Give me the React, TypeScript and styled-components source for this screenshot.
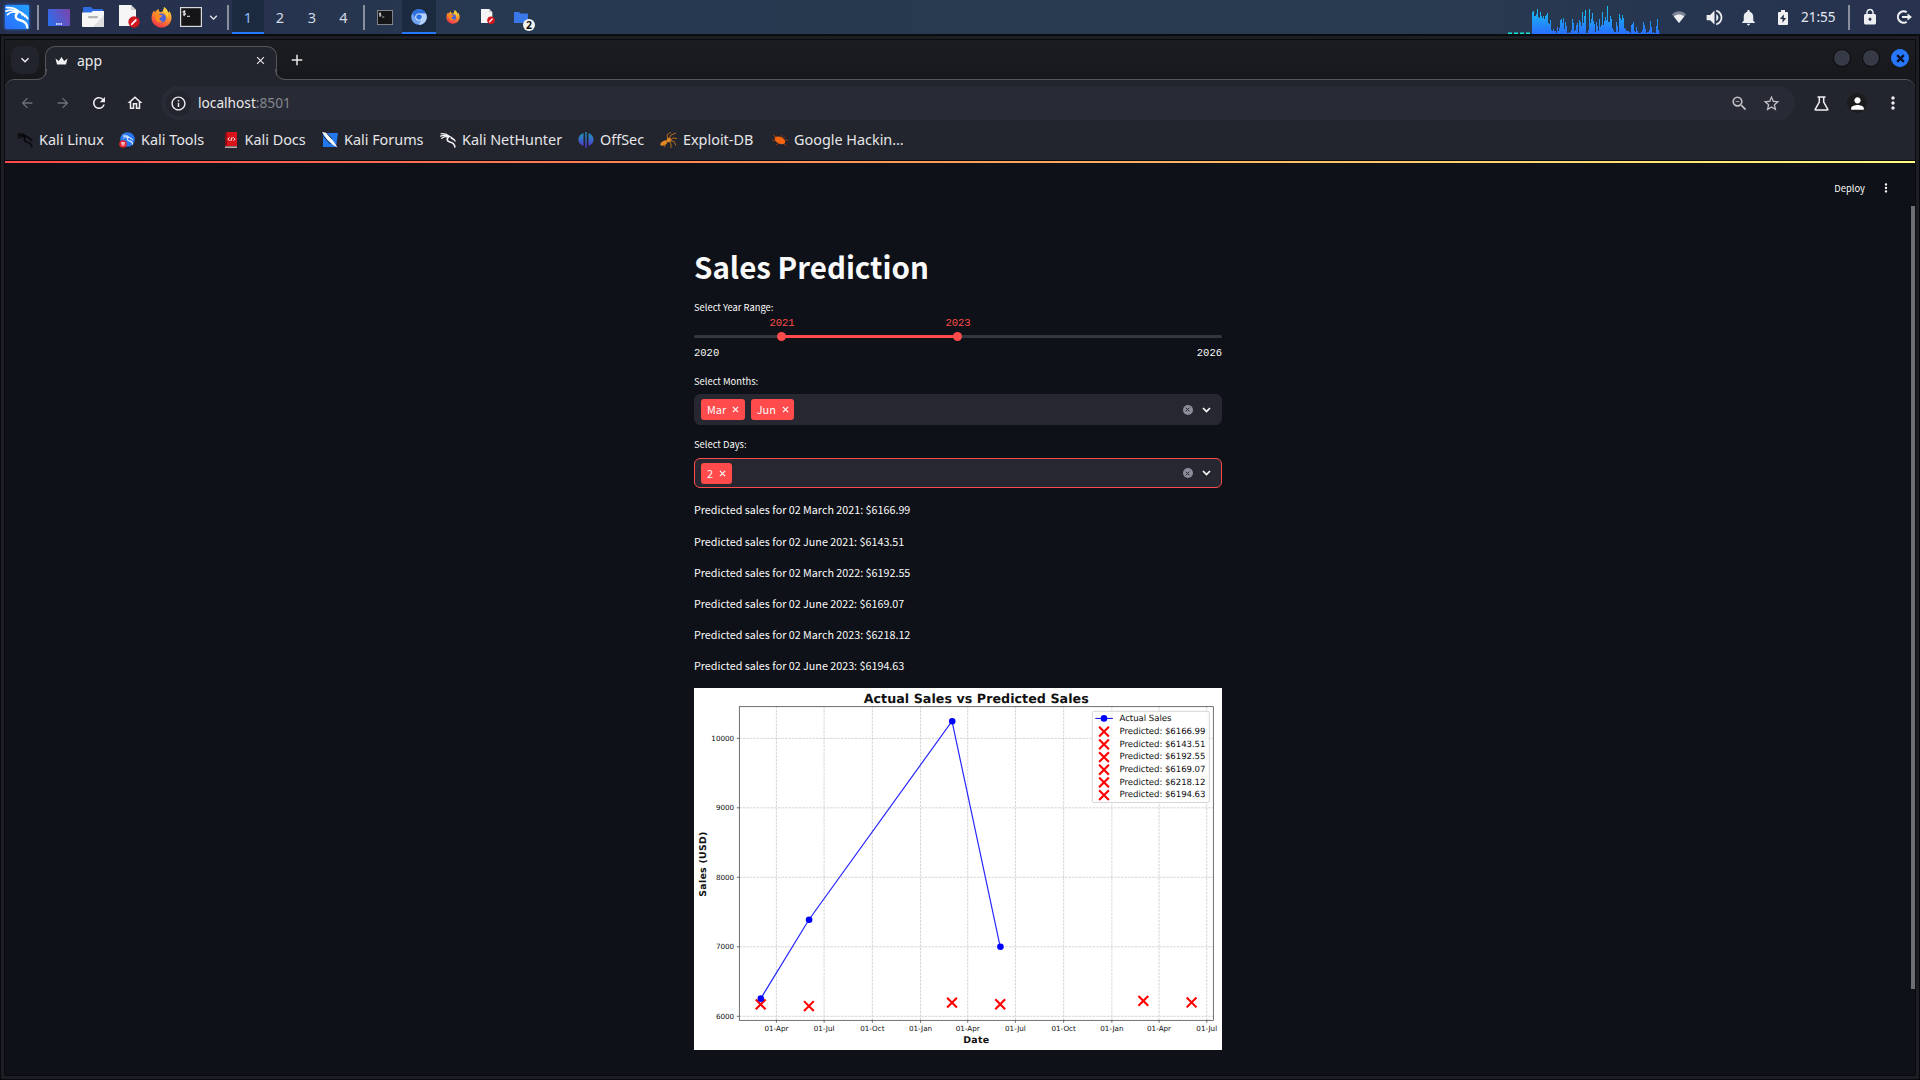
import React from "react";
import styled, { createGlobalStyle, css } from "styled-components";
import {
  MdArrowBack,
  MdArrowForward,
  MdRefresh,
  MdOutlineHome,
  MdInfoOutline,
  MdZoomOut,
  MdStarBorder,
  MdMoreVert,
  MdPerson,
  MdExpandMore,
  MdClose,
  MdAdd,
  MdLock,
  MdNotifications,
  MdVolumeUp,
} from "react-icons/md";

const UI = `"Noto Sans", "Open Sans", sans-serif`;
const SANS = `"Noto Sans CJK SC", "Noto Sans", sans-serif`;
const MONO = `"Liberation Mono", monospace`;

const Global = createGlobalStyle`
  * { box-sizing: border-box; }
  body { margin: 0; background: #0e1117; overflow: hidden; }
  svg { display: block; flex: none; }
`;

/* ---------- Desktop ---------- */

const Desktop = styled.div`
  width: 1920px;
  height: 1080px;
  display: flex;
  flex-direction: column;
  background: #08090c;
  font-family: ${UI};
`;

const Panel = styled.header`
  height: 36px;
  flex: none;
  display: flex;
  border-bottom: 2px solid #0b0c10;
  background: linear-gradient(90deg, #26304c 0, #27324e 230px, #273950 480px, #293b50 1400px, #273750 1600px, #27324f 1920px);
`;

const Slot = styled.div<{ $w: number; $active?: boolean }>`
  width: ${(p) => p.$w}px;
  height: 34px;
  display: flex;
  align-items: center;
  justify-content: center;
  color: #eceef1;
  font-size: 14.5px;
  ${(p) =>
    p.$active &&
    css`
      background: #1c2a40;
      border-bottom: 2px solid #2777ff;
      padding-top: 2px;
    `}
`;

const Workspace = styled(Slot)`
  padding-bottom: 1px;
  color: ${(p) => (p.$active ? "#8dbcf2" : "#d3dce6")};
`;

const Divider = styled.div`
  width: 2px;
  height: 25px;
  margin-top: 5px;
  background: #898f9c;
`;

const Gap = styled.div<{ $w?: number }>`
  ${(p) => (p.$w ? `width: ${p.$w}px; flex: none;` : "flex: 1;")}
`;

const Clock = styled.div`
  width: 47px;
  line-height: 34px;
  font-size: 13.5px;
  color: #e4e9f0;
`;

/* ---------- Window ---------- */

const Frame = styled.div`
  flex: 1;
  min-height: 0;
  margin: 0 1px 1px;
  padding: 3px 3px 3px;
  background: #1d1e24;
`;

const Window = styled.div`
  height: 100%;
  display: flex;
  flex-direction: column;
  border: 1px solid #0a0b0e;
  background: #0e1117;
`;

const TabStrip = styled.div`
  height: 39px;
  flex: none;
  display: flex;
  padding: 0 6px;
  background: linear-gradient(#1c1d21, #17181c);
`;

const TabSearch = styled.div`
  width: 28px;
  height: 28px;
  margin-top: 6px;
  border-radius: 9px;
  background: #22242d;
  color: #f0f0f2;
  display: flex;
  align-items: center;
  justify-content: center;
`;

const Tab = styled.div`
  position: relative;
  width: 232px;
  height: 34px;
  margin: 6px 0 0 6px;
  padding: 0 9px 6px;
  display: flex;
  align-items: center;
  border: 1px solid #54565c;
  border-bottom: 0;
  border-radius: 10px 10px 0 0;
  background: #22252e;
  color: #ececee;
  font-size: 14px;
  z-index: 1;
  &::before,
  &::after {
    content: "";
    position: absolute;
    bottom: 0;
    width: 10px;
    height: 10px;
    border-bottom: 1px solid #54565c;
    background: transparent;
  }
  &::before {
    left: -10px;
    border-right: 1px solid #54565c;
    border-bottom-right-radius: 10px;
    box-shadow: 3px 3px 0 1px #22252e;
    clip-path: inset(0 -1px 0 0);
  }
  &::after {
    right: -10px;
    border-left: 1px solid #54565c;
    border-bottom-left-radius: 10px;
    box-shadow: -3px 3px 0 1px #22252e;
    clip-path: inset(0 0 0 -1px);
  }
`;

const TabTitle = styled.span`
  flex: 1;
  padding-left: 9px;
  line-height: 24px;
`;

const NewTab = styled.div`
  width: 40px;
  padding: 11px 0 0 11px;
  color: #e8e8ea;
`;

const Controls = styled.div`
  margin-left: auto;
  display: flex;
  gap: 11px;
  padding: 9px 0 0;
`;

const Control = styled.div<{ $close?: boolean }>`
  width: 18px;
  height: 18px;
  border-radius: 50%;
  border: 1px solid ${(p) => (p.$close ? "#2777ff" : "#08090b")};
  background: ${(p) => (p.$close ? "#2777ff" : "#363a46")};
  color: #0b1122;
  display: flex;
  align-items: center;
  justify-content: center;
`;

const Chrome = styled.div`
  height: 82px;
  flex: none;
  border-top: 1px solid #54565c;
  border-bottom: 1px solid #0b0c10;
  border-radius: 9px 9px 0 0;
  background: #22252e;
`;

const ChromeBack = styled.div`
  background: #17181c;
`;

const AddressRow = styled.div`
  display: flex;
  align-items: center;
  height: 46px;
  padding: 0 4px 0 4px;
`;

const Tool = styled.div<{ $w?: number; $dim?: boolean }>`
  width: ${(p) => p.$w ?? 36}px;
  display: flex;
  justify-content: center;
  color: ${(p) => (p.$dim ? "#6e7078" : "#eeeef0")};
`;

const Omnibox = styled.div`
  flex: 1;
  height: 34px;
  margin: 0 8px 0 8px;
  padding: 0 6px 0 5px;
  border-radius: 17px;
  background: #282a35;
  display: flex;
  align-items: center;
  color: #c0c1c6;
`;

const InfoBadge = styled.div`
  width: 25px;
  height: 25px;
  border-radius: 50%;
  background: #22252e;
  color: #ececee;
  display: flex;
  align-items: center;
  justify-content: center;
`;

const Url = styled.div`
  flex: 1;
  padding-left: 7px;
  font-size: 13.7px;
  line-height: 20px;
  color: #e9e9eb;
  span {
    color: #85878f;
  }
`;

const Avatar = styled.div`
  width: 20px;
  height: 20px;
  border-radius: 50%;
  background: #1c1c1e;
  color: #fff;
  display: flex;
  align-items: center;
  justify-content: center;
`;

const Bookmarks = styled.div`
  display: flex;
  height: 34px;
  padding: 0 0 7px 12px;
  align-items: center;
`;

const Bookmark = styled.div<{ $w: number }>`
  width: ${(p) => p.$w}px;
  display: flex;
  gap: 6px;
  align-items: center;
  white-space: nowrap;
  font-size: 14.4px;
  line-height: 24px;
  color: #e6e6e9;
`;

/* ---------- Page ---------- */

const Rainbow = styled.div`
  height: 2px;
  flex: none;
  background: linear-gradient(90deg, #ff4b4b, #ffa05c 50%, #fffd80);
`;

const Page = styled.div`
  flex: 1;
  min-height: 0;
  display: flex;
  flex-direction: column;
  align-items: center;
  position: relative;
  font-family: ${SANS};
  color: #fafafa;
`;

const Scroll = styled.div`
  position: absolute;
  right: 0;
  top: 43px;
  width: 4px;
  height: 783px;
  background: #6d6e72;
`;

const PageHeader = styled.div`
  width: 100%;
  height: 50px;
  display: flex;
  align-items: center;
  justify-content: flex-end;
  gap: 14px;
  padding-right: 22px;
  font-size: 9.4px;
  line-height: 14px;
`;

const Main = styled.main`
  width: 528px;
  margin: 33px 0 0 -4px;
  display: flex;
  flex-direction: column;
`;

const Title = styled.h1`
  margin: 0 0 12px;
  font-size: 29.5px;
  line-height: 40px;
  font-weight: 700;
`;

const Label = styled.div<{ $mb: number; $lh?: number }>`
  height: 16px;
  margin-bottom: ${(p) => p.$mb}px;
  font-size: 9.4px;
  line-height: ${(p) => p.$lh ?? 16}px;
`;

const Slider = styled.div`
  position: relative;
  height: 42px;
  margin-bottom: 14px;
  padding-top: 18px;
  font: 10.5px/12px ${MONO};
`;

const Track = styled.div`
  height: 3px;
  border-radius: 2px;
  background: linear-gradient(90deg, #33363f 16.67%, #ff4b4b 16.67% 50%, #33363f 50%);
`;

const Thumb = styled.div<{ $pos: number }>`
  position: absolute;
  left: ${(p) => p.$pos}%;
  top: 15px;
  width: 9px;
  height: 9px;
  margin-left: -4.8px;
  border-radius: 50%;
  background: #ff4b4b;
`;

const ThumbValue = styled.div<{ $pos: number }>`
  position: absolute;
  left: ${(p) => p.$pos}%;
  top: 0;
  transform: translateX(-50%);
  color: #ff4b4b;
`;

const Bounds = styled.div`
  display: flex;
  justify-content: space-between;
  padding-top: 9px;
`;

const Select = styled.div<{ $focus?: boolean }>`
  height: ${(p) => (p.$focus ? 30 : 31)}px;
  margin-bottom: ${(p) => (p.$focus ? 12 : 11)}px;
  padding: 0 10.5px 0 6px;
  border: 1px solid ${(p) => (p.$focus ? "#ff4b4b" : "#262730")};
  border-radius: 6px;
  background: #262730;
  display: flex;
  align-items: center;
  gap: 6px;
`;

const Tag = styled.div`
  height: 21px;
  padding: 0 5.5px 0 6px;
  border-radius: 3px;
  background: #ff4b4b;
  display: flex;
  align-items: center;
  gap: 6px;
  font-size: 10.9px;
  line-height: 21px;
`;

const Clear = styled.div`
  width: 10px;
  height: 10px;
  border-radius: 50%;
  margin-left: auto;
  background: #8b8d9a;
  color: #262730;
  display: flex;
  align-items: center;
  justify-content: center;
`;

const SelectArrow = styled.div`
  margin-left: 3px;
`;

const Row = styled.p`
  margin: 0 0 12px;
  font-size: 10.75px;
  line-height: 19px;
  &:first-child,
  &:last-child {
    margin-bottom: 13px;
  }
`;

/* ---------- Icons ---------- */

const Dragon = ({ size, color, w = 1.7 }: { size: number; color: string; w?: number }) => (
  <svg width={size} height={size} viewBox="0 0 24 24" fill="none" stroke={color} strokeLinecap="round">
    <path strokeWidth={w} d="M1.5 2.6C6 2.4 10 3 13.4 5.8M1 6.2C4.500 4.600 8.500 4.800 12.500 6.800M2.500 9.600C5 7 8.500 6.500 12 7.600" />
    <path strokeWidth={w * 1.1} d="M10 6.200C15.500 6.300 18.500 8.500 20 11.500M17 9.500C19.500 9.500 21.500 11 22.600 13.600" />
    <path strokeWidth={w * 1.35} d="M12.500 8C9.500 10.500 10.500 14 14.500 15C19.500 16 22 18 22.300 22.500" />
  </svg>
);

const KaliLogo = () => (
  <svg width="30" height="30" viewBox="-3 -3 30 30">
    <defs>
      <linearGradient id="kali" x1="0" y1="1" x2="1" y2="0">
        <stop offset="0" stopColor="#2b6cff" />
        <stop offset="1" stopColor="#22a2ff" />
      </linearGradient>
      <filter id="glow"><feGaussianBlur stdDeviation="1.500" /></filter>
    </defs>
    <rect width="24" height="24" rx="2" fill="#2777ff" filter="url(#glow)" />
    <rect width="24" height="24" rx="1" fill="url(#kali)" />
    <Dragon size={24} color="#fff" />
  </svg>
);

const DesktopIcon = () => (
  <svg width="22" height="17" viewBox="0 0 22 17">
    <defs>
      <linearGradient id="desk" x1="0" y1=".6" x2="1" y2=".2">
        <stop offset="0" stopColor="#2f6bea" />
        <stop offset="1" stopColor="#7a46ae" />
      </linearGradient>
    </defs>
    <rect width="22" height="17" rx="1" fill="url(#desk)" />
    <path d="M8 15h1.500M10.300 15h1.500M12.600 15h1.500" stroke="#fff" strokeWidth="1.500" />
  </svg>
);

const FilesIcon = () => (
  <svg width="22" height="20" viewBox="0 0 22 20">
    <path d="M1 1.200Q1 0 2.200 0H9l2 2h9q1 0 1 1v4H1z" fill="#2d6be0" />
    <path d="M0 5.500h9l2-1.500h11v15q0 1-1 1H1q-1 0-1-1z" fill="#f6f6f7" />
    <path d="M22 8v11q0 1-1 1H11z" fill="#dedee0" />
    <rect x="6" y="9" width="10" height="2.200" rx="1" fill="#b4b4b6" />
  </svg>
);

const EditorIcon = ({ size }: { size: number }) => (
  <svg width={size} height={size * 1.1} viewBox="0 0 21 23">
    <path d="M0 0h12l5 5v16H0z" fill="#f5f5f5" />
    <path d="M12 0l5 5h-5z" fill="#cfcfd1" />
    <circle cx="15" cy="17" r="5.700" fill="#cf1820" />
    <path d="M12.800 19.200l4-4.200" stroke="#fff" strokeWidth="1.800" strokeLinecap="round" />
  </svg>
);

const FirefoxIcon = ({ size, id }: { size: number; id: string }) => (
  <svg width={size} height={size} viewBox="0 0 22 22">
    <defs>
      <linearGradient id={id} x1=".8" y1="0" x2=".3" y2="1">
        <stop offset="0" stopColor="#ffe14a" />
        <stop offset=".4" stopColor="#ff9a2a" />
        <stop offset="1" stopColor="#f5304a" />
      </linearGradient>
    </defs>
    <path d="M13.500 0C17 2 17.800 4.500 18 6c1-.6.9-1.600.8-2.200C21 6.500 22 9.500 21.300 13c-1 5-5.300 8.500-10.300 8.500S1 17.500.6 12C.4 8.500 1.700 5.500 3.500 3.500c0 1 .2 1.600.8 2.300C5 4.500 6.500 2.500 8 2c-.2 1.500.4 2.500 1.500 3.500 1.500 0 2.300-.5 3-1.500.8-1 1.200-2.500 1-4z" fill={`url(#${id})`} />
    <circle cx="11" cy="11.500" r="4.700" fill="#4a62d8" />
    <path d="M3.500 8.200c2-1 4.500-.8 6.300.2L12.300 9c-.6 1.500-2.500 1.600-3.300 2.800-.8 1.500 1 3.200 3.500 2.700-2 2.800-6.800 1.700-7.500-2-.2-1.600-.7-3-1.500-4.300z" fill="#ff8a1e" />
    <path d="M12.500 4c2.500 1.500 4.500 3.800 4.300 7 1-1 1.200-2.500 1-4-.8-2.500-2.300-5-4.300-7 .3 1.500 0 2.800-1 4z" fill="#ffd23e" />
  </svg>
);

const TerminalIcon = ({ w, h, frame = "#dadadc" }: { w: number; h: number; frame?: string }) => (
  <svg width={w} height={h} viewBox="0 0 22 20" preserveAspectRatio="none">
    <rect x=".6" y=".6" width="20.800" height="18.800" fill="#151517" stroke={frame} strokeWidth="1.200" />
    <path d="M5.600 4.300H3.800q-.9 0-.9.800t.9.900h.9q.9 0 .9.900t-.9.900H2.900M4.200 3.200v6M7 9.300h3" stroke="#fff" strokeWidth=".9" fill="none" />
  </svg>
);

const ChromiumIcon = () => (
  <svg width="16" height="16" viewBox="0 0 16 16">
    <circle cx="8" cy="8" r="7.800" fill="#6fa4f2" />
    <path d="M8 .2a7.800 7.800 0 0 1 6.900 4.200H8A3.600 3.600 0 0 0 4.700 9.500L1.200 4.200A7.800 7.800 0 0 1 8 .2z" fill="#2f6fdc" />
    <path d="M14.900 4.400a7.800 7.800 0 0 1-7.200 11.400l3.500-6.200A3.600 3.600 0 0 0 9.500 4.400z" fill="#b4d2fb" />
    <circle cx="8" cy="8" r="3.600" fill="#fff" />
    <circle cx="8" cy="8" r="2.800" fill="#2a70e6" />
  </svg>
);

const FolderIcon = () => (
  <svg width="24" height="24" viewBox="0 0 24 24">
    <path d="M2 7h5l1.500 1.500H15q1 0 1 1V18H2z" fill="#3a78e8" />
  </svg>
);

const TaskGroup = styled.div`
  position: relative;
`;

const CountBadge = styled.span`
  position: absolute;
  left: 11px;
  top: 14px;
  width: 12px;
  height: 12px;
  border-radius: 50%;
  background: #f2f3ee;
  color: #111;
  font-size: 10.5px;
  font-weight: 700;
  line-height: 12px;
  text-align: center;
`;

const loads = [
  22, 23, 18, 18, 20, 25, 17, 16, 22, 18, 16, 18, 15, 18, 19, 21, 11, 10, 14, 4, 3, 5, 3, 3, 1, 7, 3, 6, 14, 15, 11, 16,
  5, 12, 8, 1, 1, 2, 1, 4, 15, 11, 3, 4, 9, 11, 1, 14, 12, 8, 22, 11, 18, 24, 1, 1, 4, 25, 11, 15, 21, 13, 10, 2, 12, 8,
  3, 15, 7, 9, 22, 9, 13, 17, 14, 28, 12, 12, 18, 15, 6, 4, 2, 2, 12, 8, 2, 20, 16, 14, 19, 16, 6, 5, 3, 3, 3, 2, 1, 9,
  10, 12, 3, 2, 7, 3, 1, 1, 1, 2, 4, 12, 9, 5, 1, 2, 2, 4, 13, 7, 1, 2, 1, 1, 8, 15, 4, 1,
];

const CpuGraph = () => (
  <svg width="152" height="34" viewBox="0 0 152 34" shapeRendering="crispEdges">
    <defs>
      <linearGradient id="cpu" gradientUnits="userSpaceOnUse" x1="0" y1="34" x2="0" y2="6">
        <stop offset="0" stopColor="#2a6eff" />
        <stop offset="1" stopColor="#14c8ec" />
      </linearGradient>
    </defs>
    {[0, 6, 12, 18].map((x) => (
      <g key={x}>
        <rect x={x} y="32" width="4" height="1" fill="#1c8f92" />
        <rect x={x} y="33" width="4" height="1" fill="#17e2cf" />
      </g>
    ))}
    <path d={loads.map((h, i) => `M${24 + i} 34v${-h}h1v${h}z`).join("")} fill="url(#cpu)" />
  </svg>
);

const WifiIcon = () => (
  <svg width="14" height="12" viewBox="0 0 14 12">
    <path d="M7 12L0 3.400C4-.9 10-.9 14 3.400z" fill="#7b8496" />
    <path d="M7 12L1.900 5.500C4.500 2.900 9.500 2.900 12.100 5.500z" fill="#eceef0" />
  </svg>
);

const BatteryIcon = () => (
  <svg width="10" height="15" viewBox="0 0 10 15">
    <path d="M3 0h4v2h2q1 0 1 1v11q0 1-1 1H1q-1 0-1-1V3q0-1 1-1h2z" fill="#f0f0f0" />
    <path d="M5.800 4.300L2 9h2.500v3.700L8.200 8H5.800z" fill="#27334f" />
  </svg>
);

const LogoutIcon = () => (
  <svg width="15" height="14" viewBox="0 0 15 14" fill="none" stroke="#eceef0" strokeWidth="2">
    <path d="M9.700 2.200A5.700 5.700 0 1 0 9.700 11.800" />
    <path d="M5 7h6" />
    <path d="M10.500 3.600L15 7l-4.500 3.400z" fill="#eceef0" stroke="none" />
  </svg>
);

const Crown = () => (
  <svg width="13" height="10" viewBox="0 0 13 10" fill="#f0f0f2">
    <path d="M.5 2.500L3.800 5 6.500 1l2.700 4 3.300-2.500L11 8.500H2z" />
  </svg>
);

const Flask = () => (
  <svg width="15" height="15" viewBox="0 0 15 15" fill="none" stroke="#f0f0f2" strokeWidth="1.500">
    <path d="M3.500 1h8M5.300 1v5L1.200 13.300q-.3.700.5.700h11.600q.8 0 .5-.7L9.700 6V1" />
  </svg>
);

const ToolsIcon = () => (
  <svg width="16" height="16" viewBox="0 0 16 16">
    <circle cx="8.500" cy="7.500" r="7.300" fill="#2777f0" />
    <g transform="translate(3.500 2)"><Dragon size={11} color="#dfeaff" w={1.8} /></g>
    <circle cx="4" cy="12" r="3.800" fill="#e5232e" />
    <path d="M2 10.800h4M3.200 10.800v3M4.900 10.800v3" stroke="#fff" strokeWidth=".9" />
  </svg>
);

const DocsIcon = () => (
  <svg width="16" height="16" viewBox="0 0 16 16">
    <path d="M2 1.500L4 0h10v14H2z" fill="#d8131a" />
    <path d="M2 1l2-1v13.500L2 15z" fill="#8c0d14" />
    <path d="M2 14.500h12v1.300H2z" fill="#e4c8c8" />
    <path d="M6.500 5.500L5 7.200l1.500 1.600M10.500 5.500L12 7.200l-1.500 1.600M9.200 5.200L7.800 9" stroke="#fff" fill="none" strokeWidth="1" />
  </svg>
);

const ForumsIcon = () => (
  <svg width="16" height="16" viewBox="0 0 16 16">
    <path d="M1 1h15l-2 14H1z" fill="#2478ee" />
    <path d="M0 0l4 .8 3 2.700 5 6.500 3.500 5.500-4.500-2.500-6-5.500z" fill="#f6f7f9" />
    <path d="M5 1.500l5 5.500M1.500 4.500l7 7.500" stroke="#20242c" strokeWidth="1" />
  </svg>
);

const OffsecIcon = () => (
  <svg width="16" height="16" viewBox="0 0 16 16">
    <defs>
      <linearGradient id="off" x1="0" y1="0" x2="0" y2="1">
        <stop offset="0" stopColor="#18a0b8" />
        <stop offset="1" stopColor="#5a2bd6" />
      </linearGradient>
    </defs>
    <path d="M5.500 1v13C-1.300 11.500-1.300 3.500 5.500 1zM7.300 0h1.400v16H7.300zM10.500 1c6.800 2.500 6.800 10.500 0 13z" fill="url(#off)" />
  </svg>
);

const ExploitIcon = () => (
  <svg width="17" height="16" viewBox="0 0 17 16" fill="none" stroke="#c9771c" strokeWidth=".9">
    <ellipse cx="4" cy="11" rx="4" ry="2.100" transform="rotate(-30 4 11)" fill="#e58a22" stroke="none" />
    <circle cx="9" cy="8" r="2.300" fill="#e58a22" stroke="none" />
    <path d="M8 7L7 3l4-3M9 7l2-4 5-2M10 8l3-2 4 .5M10 8.500l4 1 2 4M9 9l2 3v4M7 9l-1 3-2 3" />
  </svg>
);

const HackingIcon = () => (
  <svg width="16" height="16" viewBox="0 0 16 16">
    <path d="M1 3l5 3M0 8l5 1M4 13l3-2M15 14l-4-3M16 8l-5 0M10 3L9 6M2 5.500l4 2M13 5l-3 1.500" stroke="#8a3a14" strokeWidth="1" />
    <ellipse cx="8" cy="8.300" rx="5.600" ry="3.300" transform="rotate(26 8 8.300)" fill="#f2640f" />
  </svg>
);

const SmallCross = ({ size, w }: { size: number; w: number }) => (
  <svg width={size} height={size} viewBox="0 0 8 8" stroke="currentColor" strokeWidth={w}>
    <path d="M1 1l6 6M7 1L1 7" />
  </svg>
);

const SmallChevron = () => (
  <svg width="9" height="6" viewBox="0 0 9 6" fill="none" stroke="#fafafa" strokeWidth="1.700">
    <path d="M1 1l3.500 3.500L8 1" />
  </svg>
);

/* ---------- Chart ---------- */

const px = (day: number) => 82.4 + day * 0.5242;
const py = (usd: number) => 328.3 - (usd - 6000) * 0.0695;

const quarters: [number, string][] = [
  [0, "01-Apr"], [91, "01-Jul"], [183, "01-Oct"], [275, "01-Jan"], [365, "01-Apr"],
  [456, "01-Jul"], [548, "01-Oct"], [640, "01-Jan"], [730, "01-Apr"], [821, "01-Jul"],
];
const actual: [number, number][] = [[-30, 6254], [62, 7389], [335, 10246], [427, 7000]];
const predictions = [
  { date: "02 March 2021", day: -30, usd: 6166.99 },
  { date: "02 June 2021", day: 62, usd: 6143.51 },
  { date: "02 March 2022", day: 335, usd: 6192.55 },
  { date: "02 June 2022", day: 427, usd: 6169.07 },
  { date: "02 March 2023", day: 700, usd: 6218.12 },
  { date: "02 June 2023", day: 792, usd: 6194.63 },
];

const ChartSvg = styled.svg`
  background: #fff;
  font-family: "DejaVu Sans", sans-serif;
  fill: #111;
  text-rendering: geometricPrecision;
`;

const Cross = ({ x, y }: { x: number; y: number }) => (
  <path d={`M${x - 4.9} ${y - 4.9}l9.800 9.800m0-9.800l-9.800 9.800`} stroke="#ff0000" strokeWidth="2.100" />
);

const Chart = () => (
  <ChartSvg width="528" height="362" viewBox="0 0 528 362">
    <text x="282.200" y="15" textAnchor="middle" fontSize="12.700" fontWeight="700" textLength="225">Actual Sales vs Predicted Sales</text>
    <g stroke="#b0b0b0" strokeOpacity=".7" strokeWidth=".8" strokeDasharray="2.400 1.100">
      {quarters.map(([d]) => <path key={d} d={`M${px(d)} 332.300V18.700`} />)}
      {[6000, 7000, 8000, 9000, 10000].map((v) => <path key={v} d={`M45.300 ${py(v)}H519.300`} />)}
    </g>
    {predictions.map((p) => <Cross key={p.date} x={px(p.day)} y={py(p.usd) - 0.3} />)}
    <polyline points={actual.map(([d, v]) => `${px(d)},${py(v)}`).join(" ")} fill="none" stroke="#0000ff" strokeOpacity=".85" strokeWidth="1.200" />
    {actual.map(([d, v]) => <circle key={d} cx={px(d) + 0.2} cy={py(v)} r="3.300" fill="#0000ff" />)}
    <rect x="45.300" y="18.700" width="474" height="313.600" fill="none" stroke="#333" strokeWidth=".7" />
    <g fontSize="7.200" fill="#111">
      {quarters.map(([d, t]) => (
        <g key={d}>
          <path d={`M${px(d)} 332.300v2.500`} stroke="#333" strokeWidth=".7" />
          <text x={px(d)} y="343" textAnchor="middle">{t}</text>
        </g>
      ))}
      {[6000, 7000, 8000, 9000, 10000].map((v) => (
        <g key={v}>
          <path d={`M45.300 ${py(v)}h-2.500`} stroke="#333" strokeWidth=".7" />
          <text x="40.200" y={py(v) + 2.6} textAnchor="end">{v}</text>
        </g>
      ))}
    </g>
    <text x="282.200" y="355" textAnchor="middle" fontSize="9.400" fontWeight="700" textLength="25.800">Date</text>
    <text transform="translate(12.300 176.200) rotate(-90)" textAnchor="middle" fontSize="9.400" fontWeight="700" textLength="65">Sales (USD)</text>
    <rect x="398.300" y="23.300" width="117" height="91.200" rx="1.500" fill="#fff" fillOpacity=".8" stroke="#ccc" strokeWidth=".8" />
    <path d="M401.300 30.400h17.500" stroke="#0000ff" strokeWidth="1" />
    <circle cx="410" cy="30.400" r="3.300" fill="#0000ff" />
    <g fontSize="8.600">
      <text x="425.500" y="33.300" textLength="52">Actual Sales</text>
      {predictions.map((p, i) => (
        <g key={p.date}>
          <Cross x={410} y={43.7 + i * 12.68} />
          <text x="425.500" y={46 + i * 12.64} textLength="86">{`Predicted: $${p.usd}`}</text>
        </g>
      ))}
    </g>
  </ChartSvg>
);

/* ---------- App ---------- */

const bookmarks: { name: string; w: number; icon: React.ReactNode }[] = [
  { name: "Kali Linux", w: 102, icon: <Dragon size={16} color="#08090b" w={1.8} /> },
  { name: "Kali Tools", w: 103.5, icon: <ToolsIcon /> },
  { name: "Kali Docs", w: 99.5, icon: <DocsIcon /> },
  { name: "Kali Forums", w: 118, icon: <ForumsIcon /> },
  { name: "Kali NetHunter", w: 138, icon: <Dragon size={16} color="#f2f2f4" w={1.8} /> },
  { name: "OffSec", w: 82, icon: <OffsecIcon /> },
  { name: "Exploit-DB", w: 112, icon: <ExploitIcon /> },
  { name: "Google Hackin…", w: 140, icon: <HackingIcon /> },
];

const MultiSelect = ({ values, focus }: { values: string[]; focus?: boolean }) => (
  <Select $focus={focus}>
    {values.map((v) => (
      <Tag key={v}>
        {v}
        <SmallCross size={7} w={1.45} />
      </Tag>
    ))}
    <Clear><SmallCross size={5} w={1.6} /></Clear>
    <SelectArrow><SmallChevron /></SelectArrow>
  </Select>
);

export default function App() {
  return (
    <Desktop>
      <Global />
      <Panel>
        <Gap $w={2} />
        <Slot $w={30}><KaliLogo /></Slot>
        <Gap $w={5} />
        <Divider />
        <Gap $w={3} />
        <Slot $w={34}><DesktopIcon /></Slot>
        <Slot $w={34}><FilesIcon /></Slot>
        <Gap $w={9} />
        <Slot $w={21}><EditorIcon size={21} /></Slot>
        <Slot $w={43}><FirefoxIcon size={21} id="fox-a" /></Slot>
        <Slot $w={16}><TerminalIcon w={22} h={20} /></Slot>
        <Slot $w={28}><MdExpandMore size={15} /></Slot>
        <Divider />
        <Gap $w={3} />
        <Workspace $w={32} $active>1</Workspace>
        <Workspace $w={32}>2</Workspace>
        <Workspace $w={32}>3</Workspace>
        <Workspace $w={31}>4</Workspace>
        <Gap $w={4} />
        <Divider />
        <Gap $w={3} />
        <Slot $w={34}><TerminalIcon w={16} h={15} frame="#8f8f92" /></Slot>
        <Slot $w={34} $active><ChromiumIcon /></Slot>
        <Slot $w={34}><FirefoxIcon size={14} id="fox-b" /></Slot>
        <Slot $w={36}><EditorIcon size={14} /></Slot>
        <Slot $w={36}>
          <TaskGroup>
            <FolderIcon />
            <CountBadge>2</CountBadge>
          </TaskGroup>
        </Slot>
        <Gap />
        <CpuGraph />
        <Slot $w={38}><WifiIcon /></Slot>
        <Slot $w={33}><MdVolumeUp size={21} /></Slot>
        <Slot $w={35}><MdNotifications size={19} /></Slot>
        <Slot $w={33}><BatteryIcon /></Slot>
        <Gap $w={2} />
        <Clock>21:55</Clock>
        <Divider />
        <Slot $w={39}><MdLock size={18} /></Slot>
        <Slot $w={30}><LogoutIcon /></Slot>
        <Gap $w={1} />
      </Panel>
      <Frame>
        <Window>
          <TabStrip>
            <TabSearch><MdExpandMore size={16} /></TabSearch>
            <Tab>
              <Crown />
              <TabTitle>app</TabTitle>
              <MdClose size={13} />
            </Tab>
            <NewTab><MdAdd size={18} /></NewTab>
            <Controls>
              <Control />
              <Control />
              <Control $close><SmallCross size={9} w={2} /></Control>
            </Controls>
          </TabStrip>
          <ChromeBack>
            <Chrome>
              <AddressRow>
                <Tool $dim><MdArrowBack size={16} /></Tool>
                <Tool $dim><MdArrowForward size={16} /></Tool>
                <Tool><MdRefresh size={18} /></Tool>
                <Tool><MdOutlineHome size={18} /></Tool>
                <Omnibox>
                  <InfoBadge><MdInfoOutline size={17} /></InfoBadge>
                  <Url>localhost<span>:8501</span></Url>
                  <MdZoomOut size={19} />
                  <Gap $w={13} />
                  <MdStarBorder size={19} />
                  <Gap $w={8} />
                </Omnibox>
                <Tool><Flask /></Tool>
                <Tool><Avatar><MdPerson size={19} /></Avatar></Tool>
                <Tool><MdMoreVert size={20} /></Tool>
              </AddressRow>
              <Bookmarks>
                {bookmarks.map((b) => (
                  <Bookmark key={b.name} $w={b.w}>
                    {b.icon}
                    {b.name}
                  </Bookmark>
                ))}
              </Bookmarks>
            </Chrome>
          </ChromeBack>
          <Rainbow />
          <Page>
            <Scroll />
            <PageHeader>
              Deploy
              <MdMoreVert size={14} />
            </PageHeader>
            <Main>
              <Title>Sales Prediction</Title>
              <Label $mb={3} $lh={18}>Select Year Range:</Label>
              <Slider>
                <ThumbValue $pos={16.67}>2021</ThumbValue>
                <ThumbValue $pos={50}>2023</ThumbValue>
                <Track />
                <Thumb $pos={16.67} />
                <Thumb $pos={50} />
                <Bounds>
                  <span>2020</span>
                  <span>2026</span>
                </Bounds>
              </Slider>
              <Label $mb={5}>Select Months:</Label>
              <MultiSelect values={["Mar", "Jun"]} />
              <Label $mb={6}>Select Days:</Label>
              <MultiSelect values={["2"]} focus />
              <div>
                {predictions.map((p) => (
                  <Row key={p.date}>{`Predicted sales for ${p.date}: $${p.usd}`}</Row>
                ))}
              </div>
              <Chart />
            </Main>
          </Page>
        </Window>
      </Frame>
    </Desktop>
  );
}
